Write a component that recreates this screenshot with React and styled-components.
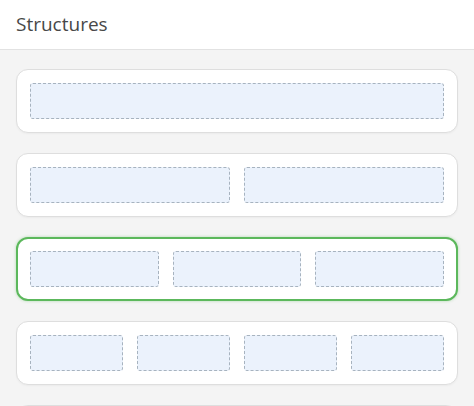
import React from 'react';
import styled, { createGlobalStyle } from 'styled-components';

const GlobalStyle = createGlobalStyle`
  html, body {
    margin: 0;
    padding: 0;
    background: #f4f4f4;
    font-family: "Open Sans", "Noto Sans", sans-serif;
  }
`;

const layouts = [1, 2, 3, 4, 5];

const App = () => {
  return (
    <>
      <GlobalStyle />
      <Panel>
        <Header>
          <Title>Structures</Title>
        </Header>
        <List>
          {layouts.map((cols, index) => (
            <Structure key={index} $active={cols === 3}>
              {Array.from({ length: cols === 5 ? 1 : cols }).map((_, i) => (
                <Column key={i} />
              ))}
            </Structure>
          ))}
        </List>
      </Panel>
    </>
  );
};

export default App;

const Panel = styled.div`
  width: 474px;
  height: 406px;
  overflow: hidden;
  background: #f4f4f4;
`;

const Header = styled.div`
  height: 49px;
  display: flex;
  align-items: center;
  padding: 0 16px;
  background: #ffffff;
  border-bottom: 1px solid #e2e2e2;
`;

const Title = styled.h2`
  margin: 0 0 2px;
  font-size: 19px;
  font-weight: 400;
  color: #484848;
  letter-spacing: 0;
`;

const List = styled.div`
  display: flex;
  flex-direction: column;
  gap: 20px;
  padding: 19px 16px 0;
`;

const Structure = styled.div`
  box-sizing: border-box;
  height: 64px;
  display: flex;
  gap: 14px;
  padding: ${(p) => (p.$active ? '12px' : '13px')};
  background: #ffffff;
  border: ${(p) => (p.$active ? '2px solid #5cb85c' : '1px solid #dedede')};
  border-radius: 12px;
  box-shadow: ${(p) =>
    p.$active ? '0 0 3px rgba(92, 184, 92, 0.45)' : '0 1px 2px rgba(0, 0, 0, 0.04)'};
  flex-shrink: 0;
`;

const Column = styled.div`
  flex: 1;
  background: #ebf2fc;
  border: 1px dashed #a7b3bf;
  border-radius: 3px;
`;
